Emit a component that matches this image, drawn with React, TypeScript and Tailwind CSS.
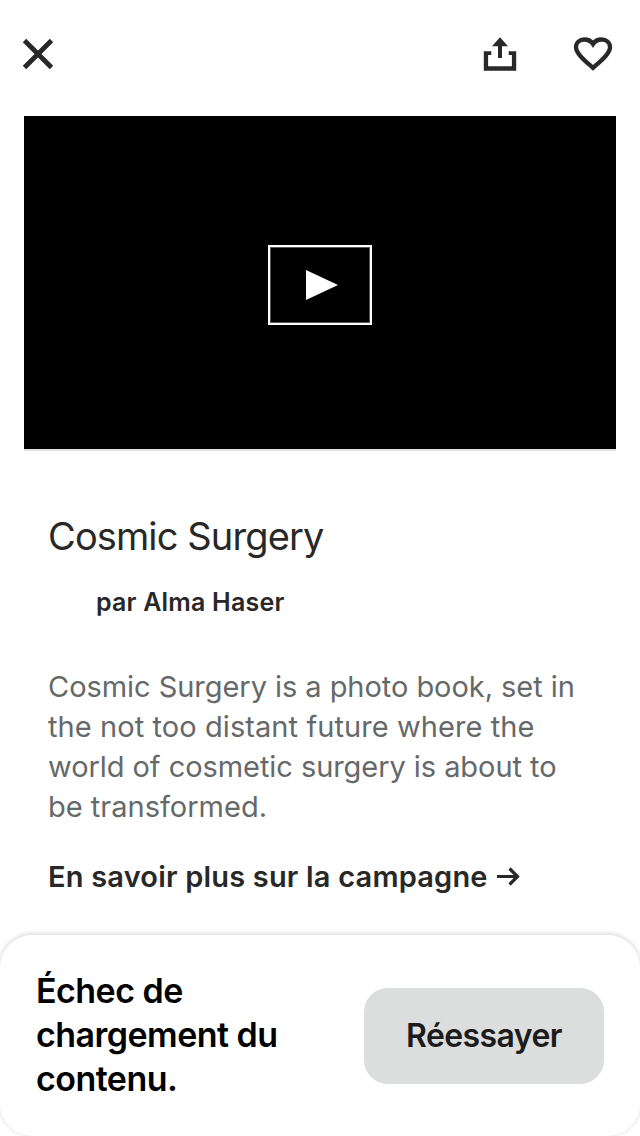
import React from "react";

function CloseIcon() {
  return (
    <svg width="32" height="32" viewBox="0 0 32 32" fill="none" stroke="#282828" strokeWidth="4.8">
      <path d="M2.5 2.5 29.5 29.5M29.5 2.5 2.5 29.5" />
    </svg>
  );
}

function ShareIcon() {
  return (
    <svg width="34" height="36" viewBox="0 0 34 36" fill="#282828">
      <path d="M17 2.3 25 11.3H19V23H15V11.3H9Z" />
      <path d="M0.8 16.3H8.3V20H5.1V31.2H28.900V20H25.7V16.3H33.2V35.7H0.8Z" />
    </svg>
  );
}

function HeartIcon() {
  return (
    <svg width="40" height="36" viewBox="0 0 40 36" fill="none" stroke="#282828" strokeWidth="4.3">
      <path d="M20 32.8C15 28.3 3 19.4 3 12.2C3 7.3 6.8 4.5 11.3 4.5C15 4.5 18.2 6.2 20 9C21.800 6.2 25 4.500 28.700 4.500C33.200 4.500 37 7.300 37 12.200C37 19.400 25 28.300 20 32.800Z" />
    </svg>
  );
}

export default function App() {
  return (
    <div className="flex h-[1136px] w-[640px] flex-col overflow-hidden bg-white font-['Inter',sans-serif] text-[#282828]">
      <header className="flex h-[116px] shrink-0 items-start pr-[27px] pl-[22px] pt-[35px]">
        <button aria-label="Fermer" className="mt-[3px]"><CloseIcon /></button>
        <button aria-label="Partager" className="ml-auto"><ShareIcon /></button>
        <button aria-label="Enregistrer" className="ml-14"><HeartIcon /></button>
      </header>

      <div className="mx-6 flex h-[335px] shrink-0 items-center justify-center border-b-2 border-[#e4e5e5] bg-black">
        <button aria-label="Lire" className="mt-[5px] flex h-20 w-[104px] items-center justify-center border-2 border-white shadow-[inset_0_0_0_1px_#555]">
          <svg width="32" height="32" viewBox="0 0 32 32" fill="white" className="ml-1">
            <path d="M0 1 32 16 0 31Z" />
          </svg>
        </button>
      </div>

      <main className="flex h-[484px] shrink-0 flex-col items-start px-12 pt-[61px] whitespace-nowrap">
        <h1 className="text-[38px] leading-12 tracking-[-0.88px]">Cosmic Surgery</h1>
        <p className="mt-[26px] ml-12 text-[25px] leading-8 font-semibold tracking-[0.2px]">par Alma Haser</p>
        <p className="mt-[49px] text-[29px] leading-10 text-[#656969]">
          <span className="block tracking-[-0.05px]">Cosmic Surgery is a photo book, set in</span>
          <span className="block tracking-[0.08px]">the not too distant future where the</span>
          <span className="block tracking-[-0.06px]">world of cosmetic surgery is about to</span>
          <span className="block">be transformed.</span>
        </p>
        <a className="mt-[30px] flex items-center gap-[9px] text-[29px] leading-10 font-semibold">
          <span className="tracking-[0.19px]">En savoir plus sur la campagne</span>
          <svg width="24" height="20" viewBox="0 0 24 20" fill="none" stroke="currentColor" strokeWidth="3.2">
            <path d="M0 9.500H20.300M12.500 1.500 20.500 9.500 12.500 17.500" />
          </svg>
        </a>
      </main>

      <section className="flex h-[201px] shrink-0 items-center justify-between rounded-[32px] bg-white px-9 shadow-[0_-1px_5px_rgba(0,0,0,0.18)]">
        <p className="pb-0.5 text-[34px] leading-11 font-semibold tracking-[-0.53px] whitespace-nowrap text-black">
          <span className="block">Échec de</span>
          <span className="block">chargement du</span>
          <span className="block">contenu.</span>
        </p>
        <button className="mt-px h-24 w-60 rounded-3xl bg-[#dcdedd] text-[32px] font-semibold tracking-[-0.6px] text-[#1c1c1c]">Réessayer</button>
      </section>
    </div>
  );
}
